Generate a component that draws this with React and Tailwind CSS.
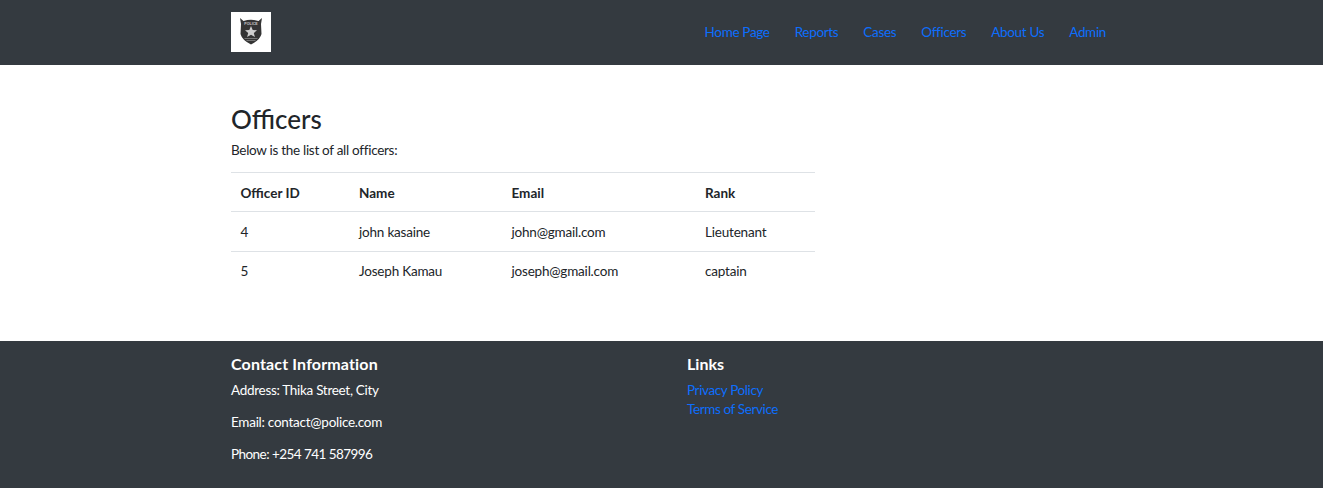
const navLinks = ['Home Page', 'Reports', 'Cases', 'Officers', 'About Us', 'Admin'];

const officers = [
  { id: 4, name: 'john kasaine', email: 'john@gmail.com', rank: 'Lieutenant' },
  { id: 5, name: 'Joseph Kamau', email: 'joseph@gmail.com', rank: 'captain' },
];

function Badge() {
  return (
    <svg viewBox="0 0 40 40" className="w-10 h-10 bg-white block">
      <path d="M9 6 L12.5 9 Q20 6.5 27.5 9 L31 6 L30 12 L30.5 22 Q29 28 20 32.5 Q11 28 9.5 22 L10 12 Z" fill="#343434" />
      <text x="20" y="13" textAnchor="middle" fontSize="3.6" fontWeight="700" fill="#c8c8c8" fontFamily="Liberation Sans, sans-serif">POLICE</text>
      <path d="M20 14 L21.7 18 L26 18.3 L22.8 21 L23.9 25 L20 22.8 L16.1 25 L17.2 21 L14 18.3 L18.3 18 Z" fill="#cfcfcf" />
      <path d="M13.5 26.5 H26.5 M15.5 28.5 H24.5" stroke="#858585" strokeWidth="0.8" />
    </svg>
  );
}

export default function App() {
  return (
    <div className="min-h-[488px] flex flex-col bg-white font-['Lato',sans-serif] text-[13.5px] text-[#212529]">
      <header className="h-[65px] bg-[#343a40] pl-[231px] pr-[217px] pb-[1px] flex items-center justify-between">
        <Badge />
        <nav className="flex gap-[25px] tracking-[-0.33px]">
          {navLinks.map((link) => (
            <a key={link} href="#" className="text-[#0d6efd]">{link}</a>
          ))}
        </nav>
      </header>

      <main className="flex-1 pl-[231px] pt-[39px]">
        <h1 className="text-[26px] leading-[30px] font-medium">Officers</h1>
        <p className="mt-[6px] mb-[1px] leading-[21px] tracking-[-0.29px]">Below is the list of all officers:</p>
        <table className="mt-[11px] w-[584px] table-fixed border-collapse">
          <thead>
            <tr className="border-y border-[#dee2e6] h-[39px] text-left">
              <th className="w-[118.5px] pl-[9.5px] pt-[2px] font-bold">Officer ID</th>
              <th className="w-[152.5px] pl-[9.5px] pt-[2px] font-bold">Name</th>
              <th className="w-[193.5px] pl-[9.5px] pt-[2px] font-bold">Email</th>
              <th className="pl-[9.5px] pt-[2px] font-bold">Rank</th>
            </tr>
          </thead>
          <tbody className="tracking-[-0.2px]">
            {officers.map((officer, i) => (
              <tr key={officer.id} className={i === 0 ? 'h-[40px] border-b border-[#dee2e6] [&>td]:pt-[2px]' : 'h-[39px]'}>
                <td className="pl-[9.5px]">{officer.id}</td>
                <td className="pl-[9.5px]">{officer.name}</td>
                <td className="pl-[9.5px]">{officer.email}</td>
                <td className="pl-[9.5px]">{officer.rank}</td>
              </tr>
            ))}
          </tbody>
        </table>
      </main>

      <footer className="h-[147px] bg-[#343a40] pl-[231px] pt-[13px] flex text-white">
        <div className="w-[456px]">
          <h2 className="text-[16px] leading-[20px] font-bold tracking-[0.15px]">Contact Information</h2>
          <p className="mt-[7px] leading-[19px] tracking-[-0.3px]">Address: Thika Street, City</p>
          <p className="mt-[13px] leading-[19px] tracking-[-0.26px]">Email: contact@police.com</p>
          <p className="mt-[13px] leading-[19px] tracking-[-0.55px]">Phone: +254 741 587996</p>
        </div>
        <div>
          <h2 className="text-[16px] leading-[20px] font-bold">Links</h2>
          <ul className="mt-[7px] leading-[19px] tracking-[-0.38px]">
            <li><a href="#" className="text-[#0d6efd]">Privacy Policy</a></li>
            <li><a href="#" className="text-[#0d6efd]">Terms of Service</a></li>
          </ul>
        </div>
      </footer>
    </div>
  );
}
